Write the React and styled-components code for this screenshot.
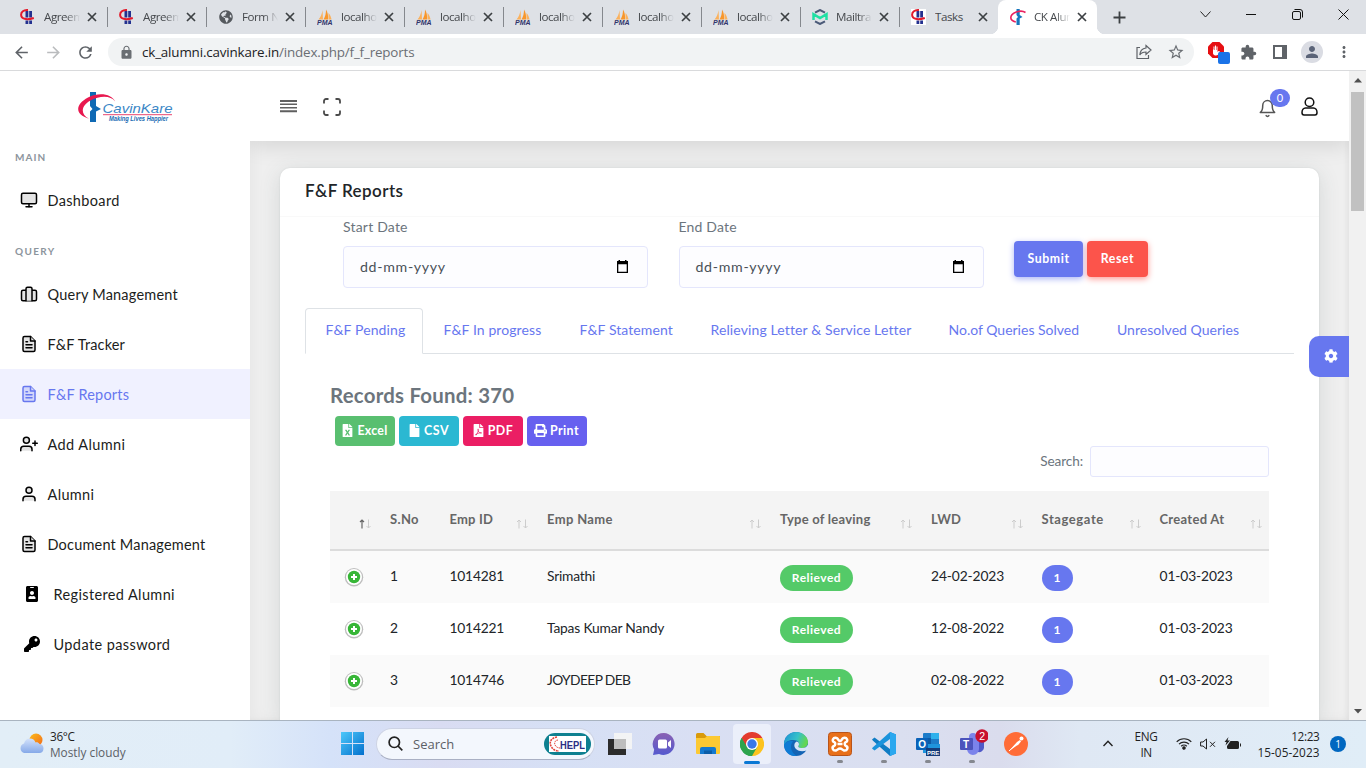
import React from 'react';
import styled, { createGlobalStyle, css } from 'styled-components';
import { FiMonitor, FiBriefcase, FiFileText, FiUserPlus, FiUser, FiBell } from 'react-icons/fi';
import { FaIdBadge, FaKey, FaCog, FaFileExcel, FaFile, FaFilePdf, FaPrint, FaGlobeAmericas } from 'react-icons/fa';
import { MdLock, MdExtension, MdPerson, MdStarBorder, MdRefresh, MdArrowBack, MdArrowForward, MdMoreVert } from 'react-icons/md';

const GlobalStyle = createGlobalStyle`
  *, *::before, *::after { box-sizing: border-box; }
  html, body { margin: 0; padding: 0; overflow: hidden; }
  body { font-family: Lato, "Liberation Sans", sans-serif; }
  svg { display: block; flex: none; }
`;

const ui = '"Open Sans", "Noto Sans", sans-serif';

/* ---------- shared ---------- */
const Label = styled.span`
  white-space: nowrap;
  letter-spacing: ${(p) => p.$ls || 0}px;
`;

const Screen = styled.div`
  width: 1366px;
  height: 768px;
  display: flex;
  flex-direction: column;
  overflow: hidden;
  background: #fff;
`;

/* ---------- browser ---------- */
const TabStrip = styled.div`
  height: 34px;
  flex: none;
  display: flex;
  background: #dee1e6;
  padding-left: 8px;
  font: 12px ${ui};
  color: #45484c;
`;

const BrowserTab = styled.div`
  position: relative;
  width: 99px;
  height: 34px;
  flex: none;
  display: flex;
  align-items: center;
  padding-left: 11px;
  border-radius: 8px 8px 0 0;
  ${(p) => p.$divider && css`
    &::after { content: ''; position: absolute; right: -1px; top: 7px; width: 1px; height: 20px; background: #85888d; }
  `}
  ${(p) => p.$active && css`
    background: #fff;
    &::before, &::after { content: ''; position: absolute; bottom: 0; width: 8px; height: 8px; }
    &::before { left: -8px; background: radial-gradient(circle at 0 0, #dee1e6 8px, #fff 8.5px); }
    &::after { right: -8px; background: radial-gradient(circle at 100% 0, #dee1e6 8px, #fff 8.5px); }
  `}
`;

const TabTitle = styled.span`
  width: 36px;
  margin-left: 8px;
  margin-right: 7px;
  margin-top: -1px;
  overflow: hidden;
  white-space: nowrap;
  font-size: 11.6px;
  letter-spacing: -0.45px;
  -webkit-mask-image: ${(p) => (p.$plain ? 'none' : 'linear-gradient(90deg, #000 60%, transparent 100%)')};
`;

const NewTab = styled.div`
  width: 44px;
  display: flex;
  align-items: center;
  justify-content: center;
`;

const WindowControls = styled.div`
  margin-left: auto;
  display: grid;
  grid-template-columns: repeat(4, 46px);
  justify-items: center;
  align-items: center;
  height: 28px;
`;

const AddressBar = styled.div`
  height: 37px;
  flex: none;
  display: flex;
  align-items: center;
  border-bottom: 1px solid #d9dadc;
  padding: 0 6px 0 12px;
  color: #5f6368;
`;

const NavButtons = styled.div`
  width: 96px;
  display: flex;
  gap: 13px;
`;

const Omnibox = styled.div`
  width: 1086px;
  height: 28px;
  border-radius: 14px;
  background: #f1f3f4;
  display: flex;
  align-items: center;
  padding: 0 0 0 11px;
  font: 13.4px ${ui};
  color: #6a6e73;
`;

const Url = styled.div`
  margin-left: 8px;
  flex: 1;
  white-space: nowrap;
  letter-spacing: -0.16px;
  b { font-weight: 400; color: #202124; }
`;

const Extensions = styled.div`
  margin-left: auto;
  display: flex;
  align-items: center;
`;

const ExtSlot = styled.div`
  width: ${(p) => p.$w}px;
  display: flex;
  justify-content: center;
`;

const Profile = styled.div`
  width: 22px;
  height: 22px;
  border-radius: 50%;
  background: #dadce3;
  color: #5b6478;
  display: flex;
  align-items: center;
  justify-content: center;
`;

/* ---------- page ---------- */
const Viewport = styled.div`
  height: 649px;
  flex: none;
  display: flex;
  overflow: hidden;
`;

const Sidebar = styled.nav`
  width: 250px;
  flex: none;
  background: #fff;
  padding-top: 20px;
`;

const LogoWrap = styled.div`
  height: 52px;
  padding-left: 77px;
`;

const Section = styled.div`
  height: ${(p) => p.$h}px;
  padding: ${(p) => p.$pt}px 0 0 15px;
  font-size: 10px;
  line-height: 14px;
  font-weight: 700;
  color: #8d959d;
`;

const MenuItem = styled.div`
  height: 50px;
  display: flex;
  align-items: center;
  padding: 2px 0 0 ${(p) => (p.$indent ? 23.5 : 19.5)}px;
  font-size: 14.5px;
  line-height: 20px;
  color: ${(p) => (p.$active ? '#6777ef' : '#1b1d20')};
  background: ${(p) => (p.$active ? '#f0f1ff' : 'transparent')};
`;

const MenuIcon = styled.span`
  width: ${(p) => (p.$indent ? 30 : 28)}px;
  margin-top: -3px;
  color: ${(p) => (p.$active ? '#6777ef' : '#000')};
  svg { fill: ${(p) => (p.$solid ? 'currentColor' : p.$active ? '#d3d7fa' : '#e4e4e4')}; }
`;

const Main = styled.main`
  width: 1099px;
  flex: none;
  display: flex;
  flex-direction: column;
  background: #efefef;
  box-shadow: inset 4px 0 14px rgba(0, 0, 0, 0.035), inset -3px 0 4px rgba(0, 0, 0, 0.04);
`;

const TopBar = styled.header`
  height: 70px;
  flex: none;
  display: flex;
  align-items: center;
  padding: 1px 31px 0 29.5px;
  background: #fff;
  box-shadow: 0 3px 22px rgba(0, 0, 0, 0.13);
  clip-path: inset(0 0 -40px 0);
`;

const TopLeft = styled.div`
  display: flex;
  align-items: center;
  gap: 26px;
`;

const TopRight = styled.div`
  margin-left: auto;
  display: flex;
  align-items: center;
  gap: 24px;
`;

const BellWrap = styled.div`
  position: relative;
  color: #555;
  padding-top: 4px;
`;

const Count = styled.span`
  position: absolute;
  left: 12px;
  top: -6px;
  width: 20px;
  height: 18px;
  border-radius: 9px;
  background: #6777ef;
  color: #fff;
  font-size: 11px;
  line-height: 18px;
  text-align: center;
`;

const Card = styled.section`
  margin: 27px 30px 0;
  flex: 1;
  background: #fff;
  border-radius: 10px 10px 0 0;
  box-shadow: 0 4px 22px rgba(60, 80, 80, 0.14), 0 0 2px rgba(60, 80, 80, 0.12);
`;

const CardHeader = styled.h4`
  margin: 0;
  height: 49px;
  padding: 12px 25px 0;
  border-bottom: 1px solid #f9f9f9;
  font-size: 17px;
  line-height: 22px;
  font-weight: 600;
  color: #212529;
`;

const FilterRow = styled.div`
  height: 91px;
  padding-left: 63px;
  display: flex;
  gap: 30.5px;
`;

const Field = styled.label`
  width: 305px;
  display: flex;
  flex-direction: column;
  font-size: 14px;
  line-height: 20px;
  color: #6c757d;
`;

const DateInput = styled.div`
  margin-top: 9px;
  height: 42px;
  border: 1px solid #e4e6fc;
  border-radius: 4px;
  background: #fdfdff;
  display: flex;
  align-items: center;
  justify-content: space-between;
  padding: 0 18px 1px 16px;
  font-size: 14.2px;
  color: #495057;
`;

const Actions = styled.div`
  padding-top: 24px;
  display: flex;
  gap: 4px;
`;

const ActionButton = styled.button`
  width: ${(p) => p.$w}px;
  height: 36px;
  padding: 0 0 2px;
  border: 0;
  border-radius: 4px;
  font: 700 12.3px Lato, sans-serif;
  color: #fff;
  background: ${(p) => p.$bg};
  box-shadow: 0 2px 6px ${(p) => p.$glow};
`;

const Tabs = styled.div`
  margin: 0 25px;
  height: 46px;
  display: flex;
  box-shadow: inset 0 -1px #dee2e6;
`;

const Tab = styled.div`
  height: 46px;
  width: ${(p) => p.$w}px;
  padding: 0 0 3px 19.500px;
  display: flex;
  align-items: center;
  font-size: 14px;
  color: #6777ef;
  border: 1px solid transparent;
  ${(p) => p.$active && css`
    background: #fff;
    border-color: #dee2e6 #dee2e6 #fff;
    border-radius: 4px 4px 0 0;
  `}
`;

const Pane = styled.div`
  padding: 28px 50px 0;
`;

const Records = styled.h3`
  margin: 0;
  height: 34px;
  font-size: 20.4px;
  line-height: 26px;
  font-weight: 700;
  color: #6c757d;
`;

const Exports = styled.div`
  padding-left: 5px;
  display: flex;
  gap: 4px;
`;

const ExportButton = styled.button`
  width: 60px;
  height: 30px;
  padding: 0 1px 1px 0;
  border: 0;
  border-radius: 4px;
  display: flex;
  align-items: center;
  justify-content: center;
  gap: 3px;
  font: 700 12.4px Lato, sans-serif;
  color: #fff;
  background: ${(p) => p.$bg};
`;

const SearchRow = styled.div`
  height: 45px;
  display: flex;
  justify-content: flex-end;
  font-size: 13.600px;
  line-height: 30px;
  color: #6c757d;
`;

const SearchBox = styled.div`
  margin-left: 7px;
  width: 179px;
  height: 31px;
  border: 1px solid #e4e6fc;
  border-radius: 3px;
  background: #fdfdff;
`;

const columns = '45px 59.5px 97.5px 233px 151px 110.5px 118px 124.5px';

const HeadRow = styled.div`
  display: grid;
  grid-template-columns: ${columns};
  height: 60px;
  background: #f4f4f4;
  border-bottom: 2px solid #dcdcdc;
`;

const HeadCell = styled.div`
  display: flex;
  justify-content: space-between;
  padding: 0 ${(p) => (p.$last ? 6 : 3)}px 0 15px;
  font-size: 13px;
  font-weight: 700;
  line-height: 56px;
  color: #666;
`;

const SortMark = styled.span`
  margin-left: auto;
  padding-top: 28px;
`;

const BodyRow = styled.div`
  display: grid;
  grid-template-columns: ${columns};
  height: 52px;
  background: ${(p) => (p.$odd ? '#fafafa' : '#fff')};
`;

const Cell = styled.div`
  display: flex;
  align-items: center;
  padding-left: 15px;
  padding-bottom: 3px;
  font-size: 13.8px;
  color: #212529;
`;

const PlusHolder = styled.span`
  margin-left: -1px;
  padding-top: 3px;
`;

const Pill = styled.span`
  margin-top: 4px;
  width: ${(p) => p.$w}px;
  height: 26px;
  border-radius: 15px;
  background: ${(p) => p.$bg};
  color: #fff;
  font-size: 12px;
  font-weight: 700;
  line-height: 25.5px;
  text-align: center;
`;

const Settings = styled.div`
  position: absolute;
  left: 1309px;
  top: 336px;
  width: 40px;
  height: 41px;
  border-radius: 10px 0 0 10px;
  background: #6777ef;
  color: #fff;
  display: flex;
  align-items: center;
  justify-content: center;
  padding: 0 0 1px 3px;
`;

const ScrollTrack = styled.div`
  width: 17px;
  flex: none;
  background: #f1f1f1;
  display: flex;
  flex-direction: column;
  align-items: center;
  justify-content: space-between;
`;

const ScrollArrow = styled.div`
  width: 17px;
  height: ${(p) => (p.$down ? 18 : 21)}px;
  padding-bottom: ${(p) => (p.$down ? 0 : 2)}px;
  display: flex;
  align-items: center;
  justify-content: center;
`;

const ScrollThumb = styled.div`
  width: 13px;
  height: 119px;
  margin-bottom: auto;
  background: #c1c1c1;
`;

/* ---------- taskbar ---------- */
const Taskbar = styled.footer`
  height: 48px;
  flex: none;
  border-top: 1px solid #a9b4c0;
  padding-bottom: 2px;
  display: flex;
  align-items: center;
  font: 11.8px ${ui};
  color: #1f1f1f;
  background: linear-gradient(90deg, #e2eef7 0, #e1edf8 230px, #d5e2f9 330px, #d9dcf2 440px, #d6e0f5 560px, #d9dff3 700px, #dadff0 900px, #dadced 1000px, #dfe8f4 1080px, #e0edf7 1366px);
`;

const Weather = styled.div`
  width: 338.5px;
  padding-left: 18.5px;
  display: flex;
  align-items: center;
  gap: 6.5px;
  line-height: 16px;
  p { margin: 0; }
  p + p { color: #5b6066; }
`;

const SearchPill = styled.div`
  margin-left: 11.5px;
  width: 218.5px;
  height: 32px;
  border-radius: 16px;
  border: 1px solid #cdd3e4;
  border-bottom-color: #a9b0c4;
  background: #f3f7fd;
  display: flex;
  align-items: center;
  padding: 0 3px 0 11px;
  font-size: 13px;
  color: #5c6066;
  > span { margin-left: 10px; flex: 1; }
`;

const AppSlot = styled.div`
  position: relative;
  width: 44px;
  height: 40px;
  display: flex;
  align-items: center;
  justify-content: center;
  ${(p) => p.$current && css`
    width: 38px;
    margin: 0 3px;
    border-radius: 4px;
    background: #ebeffa;
  `}
  &::after {
    content: ${(p) => (p.$current || p.$running ? "''" : 'none')};
    position: absolute;
    bottom: ${(p) => (p.$current ? 0 : 1)}px;
    width: ${(p) => (p.$current ? 16 : 6)}px;
    height: 3px;
    border-radius: 2px;
    background: ${(p) => (p.$current ? '#0a78d4' : '#85888f')};
  }
`;

const AppRow = styled.div`
  display: flex;
  margin-left: 3.5px;
`;

const Tray = styled.div`
  margin-left: auto;
  padding-right: 20px;
  display: flex;
  align-items: center;
  line-height: 16px;
`;

const Language = styled.div`
  width: 24px;
  margin: 0 18px 0 21px;
  text-align: center;
`;

const TrayIcons = styled.div`
  display: flex;
  align-items: center;
  gap: 8px;
`;

const Clock = styled.div`
  width: 78.5px;
  text-align: right;
`;

const Notice = styled.div`
  margin-left: 10.5px;
  width: 16px;
  height: 16px;
  border-radius: 50%;
  background: #0067c0;
  color: #fff;
  font-size: 10px;
  line-height: 16px;
  text-align: center;
`;

/* ---------- drawings ---------- */
const CloseX = () => (
  <svg width="10" height="10" viewBox="0 0 10 10" stroke="#3c4043" strokeWidth="1.7"><path d="M1 1l8 8M9 1L1 9" /></svg>
);

const HeplMark = ({ white }) => (
  <svg width="15" height="16" viewBox="0 0 15 16">
    {white && <rect width="15" height="16" fill="#fff" />}
    <path d="M5.500 2h2.800v6.500H5.500zM9.200 2H12v6.500H9.200zM5.500 11.500h2.800V15H5.500zM9.200 11.500H12V15H9.200z" fill="#23308f" />
    <path d="M8 1C3.500.8 1.100 3 1.100 5.700c0 4.300 5.500 5.600 12.700 3.300" fill="none" stroke="#e31b2c" strokeWidth="2" />
  </svg>
);

const PmaMark = () => (
  <svg width="16" height="16" viewBox="0 0 16 16">
    <path d="M5.500 1L6 10.500H1.500C3.800 8 5 5 5.500 1z" fill="#fbb15c" />
    <path d="M9 .5c1.800 3 2.400 6.500 2 10H6.500C8.300 7.500 9 4.500 9 .5z" fill="#f8962a" />
    <path d="M11.500 4c1.800 2 2.700 4.500 3 6.500h-3z" fill="#fbb15c" />
    <text x="0" y="15.800" fontFamily="Liberation Sans" fontWeight="700" fontStyle="italic" fontSize="6.300" textLength="15.500" lengthAdjust="spacingAndGlyphs" fill="#31336b">PMA</text>
  </svg>
);

const MailtrapMark = () => (
  <svg width="16" height="16" viewBox="0 0 16 16" fill="none">
    <path d="M3 3.600L8 1l5 2.600M3 12.400L8 15l5-2.600" stroke="#4b5a78" strokeWidth="2" />
    <path d="M1.500 11V5.200L8 9l6.500-3.800V11" stroke="#1fe0a4" strokeWidth="2.500" />
  </svg>
);

const CkMark = () => (
  <svg width="16" height="16" viewBox="0 0 16 16">
    <path d="M6.500 0h3.200v6l2.800 2-2.800 1.500V16H6.500V9.500L8 8 6.500 6z" fill="#1576bd" />
    <path d="M15.500 3.500C10.500 0 .8 4 .8 8.800c0 2 2 3.500 5 4.200" fill="none" stroke="#e8215f" strokeWidth="1.600" />
  </svg>
);

const CavinKareLogo = () => (
  <svg width="97" height="32" viewBox="0 0 97 32">
    <path d="M13 1h6v14l5 3-5 2.500V31h-6V20.500l2.500-2.500-2.500-3z" fill="#0f69b4" />
    <path d="M38 10.500C35 3 22 .8 11 6.500-1.500 13-3 23.500 12 27.800c-9-4.800-8-13 1.500-18.300C23 4.500 34 4.500 38 10.500z" fill="#e8184f" />
    <text x="25.500" y="22" fontFamily="Liberation Sans" fontStyle="italic" fontSize="13.500" textLength="70" lengthAdjust="spacingAndGlyphs" fill="#3b87c6">CavinKare</text>
    <path d="M26 23.700h69" stroke="#e8476f" strokeWidth="1" />
    <text x="32" y="30" fontFamily="Liberation Sans" fontWeight="700" fontStyle="italic" fontSize="6.300" textLength="59" lengthAdjust="spacingAndGlyphs" fill="#1a6cb3">Making Lives Happier</text>
  </svg>
);

const Calendar = () => (
  <svg width="13" height="13" viewBox="0 0 13 13"><path d="M2.500 0h1.500v1h5V0h1.500v1H12v12H1V1h1.500zM2.300 4.200v7.500h8.400V4.200z" fill="#000" fillRule="evenodd" /></svg>
);

const Sort = ({ up }) => (
  <svg width="13" height="10" viewBox="0 0 13 10" fill="none" strokeWidth="1">
    <path d="M3 9.500V1M1 3l2-2 2 2" stroke={up ? '#666' : '#ccc'} strokeWidth={up ? 1.200 : 1} />
    <path d="M9.500 .5V9M7.500 7l2 2 2-2" stroke="#ccc" />
  </svg>
);

const Plus = () => (
  <svg width="20" height="20" viewBox="0 0 20 20">
    <circle cx="10" cy="10.300" r="9.200" fill="#bdbdbd" />
    <circle cx="10" cy="10" r="8" fill="#fff" />
    <circle cx="10" cy="10" r="6.200" fill="#37b637" />
    <path d="M10 7v6M7 10h6" stroke="#fff" strokeWidth="2" />
  </svg>
);

const tabs = [
  ['hepl', 'Agreement'], ['hepl', 'Agreement'], ['globe', 'Form Nam'], ['pma', 'localhost'], ['pma', 'localhost'],
  ['pma', 'localhost'], ['pma', 'localhost'], ['pma', 'localhost'], ['mail', 'Mailtrap'], ['heplw', 'Tasks'], ['ck', 'CK Alumni'],
];
const marks = {
  hepl: <HeplMark />, heplw: <HeplMark white />, globe: <FaGlobeAmericas size={14} color="#55595e" />,
  pma: <PmaMark />, mail: <MailtrapMark />, ck: <CkMark />,
};

const Favicon = styled.span`
  width: 17px;
  display: flex;
  justify-content: center;
`;

const Browser = () => (
  <>
    <TabStrip>
      {tabs.map(([mark, title], i) => (
        <BrowserTab key={i} $active={i === 10} $divider={i < 9}>
          <Favicon>{marks[mark]}</Favicon>
          <TabTitle $plain={title === 'Tasks'}>{title}</TabTitle>
          <CloseX />
        </BrowserTab>
      ))}
      <NewTab><svg width="13" height="13" viewBox="0 0 13 13" stroke="#3c4043" strokeWidth="1.800"><path d="M6.500 .5v12M.5 6.500h12" /></svg></NewTab>
      <WindowControls>
        <svg width="11" height="7" viewBox="0 0 11 7" fill="none" stroke="#222"><path d="M.5 .5l5 5.500 5-5.500" /></svg>
        <svg width="10" height="2" viewBox="0 0 10 2"><path d="M0 1h10v1H0z" fill="#111" /></svg>
        <svg width="11" height="11" viewBox="0 0 11 11" fill="none" stroke="#111"><rect x=".5" y="2.500" width="8" height="8" rx="1.500" /><path d="M2.500 .5h5.500a2.500 2.500 0 012.500 2.500v5.500" /></svg>
        <svg width="11" height="11" viewBox="0 0 11 11" stroke="#111"><path d="M.5 .5l10 10M10.500 .5l-10 10" /></svg>
      </WindowControls>
    </TabStrip>
    <AddressBar>
      <NavButtons>
        <MdArrowBack size={19} />
        <MdArrowForward size={19} color="#babcbe" />
        <MdRefresh size={19} />
      </NavButtons>
      <Omnibox>
        <MdLock size={15} />
        <Url><b>ck_alumni.cavinkare.in</b>/index.php/f_f_reports</Url>
        <ExtSlot $w={28}><svg width="16" height="16" viewBox="0 0 16 16" fill="none" stroke="#5f6368" strokeWidth="1.200"><path d="M4 3.500H1v11h11.500V11" /><path d="M10 1.500L15 6l-5 4.500V8C7 8 5 9 3.800 11c.2-4 2.500-6.500 6.200-7z" /></svg></ExtSlot>
        <ExtSlot $w={36}><MdStarBorder size={18} /></ExtSlot>
      </Omnibox>
      <Extensions>
        <ExtSlot $w={28}>
          <svg width="23" height="23" viewBox="0 0 23 23">
            <path d="M5.500 1h7L17 5.500v7L12.500 17h-7L1 12.500v-7z" fill="#e60f12" />
            <path d="M6 8v4.500c.5 1.500 1.500 2 3 2s2.500-1 4-4l-1.500-.5-1 1V5.500h-1V9h-.5V4.500h-1V9H7.500V5.500h-1V9z" fill="#fff" />
            <rect x="11" y="11" width="12" height="12" rx="2" fill="#1a73e8" />
          </svg>
        </ExtSlot>
        <ExtSlot $w={32}><MdExtension size={17} /></ExtSlot>
        <ExtSlot $w={32}><svg width="14" height="14" viewBox="0 0 14 14"><path d="M0 0h14v14H0zM2 2v10h7V2z" fill="#5f6368" fillRule="evenodd" /></svg></ExtSlot>
        <ExtSlot $w={32}><Profile><MdPerson size={18} /></Profile></ExtSlot>
        <ExtSlot $w={32}><MdMoreVert size={18} /></ExtSlot>
      </Extensions>
    </AddressBar>
  </>
);

const menu = [
  [FiBriefcase, 'Query Management', 0.22], [FiFileText, 'F&F Tracker', 0.15], [FiFileText, 'F&F Reports', 0.2],
  [FiUserPlus, 'Add Alumni', 0.4], [FiUser, 'Alumni', 0.35], [FiFileText, 'Document Management', 0.19],
  [FaIdBadge, 'Registered Alumni', 0.37], [FaKey, 'Update password', 0.4],
];

const Navigation = () => (
  <Sidebar>
    <LogoWrap><CavinKareLogo /></LogoWrap>
    <Section $h={32} $pt={7}><Label $ls={1.05}>MAIN</Label></Section>
    <MenuItem><MenuIcon><FiMonitor size={18} /></MenuIcon><Label $ls={0.35}>Dashboard</Label></MenuItem>
    <Section $h={44} $pt={19}><Label $ls={1.35}>QUERY</Label></Section>
    {menu.map(([Icon, text, ls], i) => {
      const solid = i > 5;
      const active = i === 2;
      return (
        <MenuItem key={text} $active={active} $indent={solid}>
          <MenuIcon $active={active} $indent={solid} $solid={solid}><Icon size={solid ? 16 : 18} /></MenuIcon>
          <Label $ls={ls}>{text}</Label>
        </MenuItem>
      );
    })}
  </Sidebar>
);

const reportTabs = [
  ['F&F Pending', 118, 0.11], ['F&F In progress', 136, 0.09], ['F&F Statement', 131, 0.08],
  ['Relieving Letter & Service Letter', 238, 0.12], ['No.of Queries Solved', 168.500, 0], ['Unresolved Queries', 160, 0.03],
];
const heads = [
  ['', 0], ['S.No', 0.33], ['Emp ID', 0.2], ['Emp Name', 0.35], ['Type of leaving', 0.24], ['LWD', 0.28], ['Stagegate', 0.58], ['Created At', 0.29],
];
const rows = [
  ['1', '1014281', 'Srimathi', '24-02-2023', -0.2],
  ['2', '1014221', 'Tapas Kumar Nandy', '12-08-2022', -0.18],
  ['3', '1014746', 'JOYDEEP DEB', '02-08-2022', -0.62],
];
const exportsList = [
  ['Excel', '#59bf70', FaFileExcel, 0.25], ['CSV', '#2bb8d2', FaFile, 0.6], ['PDF', '#eb1e64', FaFilePdf, 0.5], ['Print', '#6760ef', FaPrint, 0.4],
];

const Report = () => (
  <Card>
    <CardHeader><Label $ls={0.42}>F&amp;F Reports</Label></CardHeader>
    <FilterRow>
      <Field><Label $ls={0.2}>Start Date</Label><DateInput><Label $ls={0.68}>dd-mm-yyyy</Label><Calendar /></DateInput></Field>
      <Field><Label $ls={0.17}>End Date</Label><DateInput><Label $ls={0.68}>dd-mm-yyyy</Label><Calendar /></DateInput></Field>
      <Actions>
        <ActionButton $w={69} $bg="#6777ef" $glow="#acb5f6"><Label $ls={0.6}>Submit</Label></ActionButton>
        <ActionButton $w={61} $bg="#fc544b" $glow="#fd9b96"><Label $ls={0.6}>Reset</Label></ActionButton>
      </Actions>
    </FilterRow>
    <Tabs>
      {reportTabs.map(([text, w, ls], i) => <Tab key={text} $w={w} $active={i === 0}><Label $ls={ls}>{text}</Label></Tab>)}
    </Tabs>
    <Pane>
      <Records><Label $ls={0.24}>Records Found: 370</Label></Records>
      <Exports>
        {exportsList.map(([text, bg, Icon, ls]) => (
          <ExportButton key={text} $bg={bg}><Icon size={13} /><Label $ls={ls}>{text}</Label></ExportButton>
        ))}
      </Exports>
      <SearchRow><Label $ls={-0.08}>Search:</Label><SearchBox /></SearchRow>
      <HeadRow>
        {heads.map(([text, ls], i) => (
          <HeadCell key={i} $last={i === 7}>
            <Label $ls={ls}>{text}</Label>
            {i !== 1 && <SortMark><Sort up={i === 0} /></SortMark>}
          </HeadCell>
        ))}
      </HeadRow>
      {rows.map(([no, id, name, lwd, ls], i) => (
        <BodyRow key={no} $odd={i % 2 === 0}>
          <Cell><PlusHolder><Plus /></PlusHolder></Cell>
          <Cell>{no}</Cell>
          <Cell><Label $ls={-0.2}>{id}</Label></Cell>
          <Cell><Label $ls={ls}>{name}</Label></Cell>
          <Cell><Pill $w={73} $bg="#54ca68"><Label $ls={0.5}>Relieved</Label></Pill></Cell>
          <Cell><Label $ls={-0.12}>{lwd}</Label></Cell>
          <Cell><Pill $w={31} $bg="#6777ef">1</Pill></Cell>
          <Cell><Label $ls={-0.12}>01-03-2023</Label></Cell>
        </BodyRow>
      ))}
    </Pane>
  </Card>
);

const Page = () => (
  <Viewport>
    <Navigation />
    <Main>
      <TopBar>
        <TopLeft>
          <svg width="17" height="13" viewBox="0 0 17 13" fill="#5f5f5f"><path d="M0 0h17v2H0zM0 3.500h17v1.500H0zM0 7h17v1.500H0zM0 10.300h17v2H0z" /></svg>
          <svg width="18" height="18" viewBox="0 0 18 18" fill="none" stroke="#4a4a4a" strokeWidth="1.800"><path d="M1 5.500V3a2 2 0 012-2h2.500M12.500 1H15a2 2 0 012 2v2.500M17 12.500V15a2 2 0 01-2 2h-2.500M5.500 17H3a2 2 0 01-2-2v-2.500" /></svg>
        </TopLeft>
        <TopRight>
          <BellWrap><FiBell size={19} strokeWidth={1.900} /><Count>0</Count></BellWrap>
          <svg width="17" height="19" viewBox="0 0 17 19" fill="none" stroke="#111" strokeWidth="1.500"><circle cx="8.500" cy="5.200" r="4.300" /><path d="M4.500 11h8c2 0 3.500 2 3.500 4.500 0 1.500-.5 2.500-2 2.500H3c-1.500 0-2-1-2-2.500C1 13 2.500 11 4.500 11z" /></svg>
        </TopRight>
      </TopBar>
      <Report />
    </Main>
    <ScrollTrack>
      <ScrollArrow><svg width="8" height="5" viewBox="0 0 8 5"><path d="M4 0l4 4.500H0z" fill="#505050" /></svg></ScrollArrow>
      <ScrollThumb />
      <ScrollArrow $down><svg width="8" height="5" viewBox="0 0 8 5"><path d="M4 4.500L8 0H0z" fill="#505050" /></svg></ScrollArrow>
    </ScrollTrack>
    <Settings><FaCog size={14} /></Settings>
  </Viewport>
);

const apps = [
  ['', <svg width="24" height="24" viewBox="0 0 24 24"><rect x="0" y="7" width="18" height="16" fill="#2c2c2c" /><rect x="6" y="1" width="18" height="16" fill="#f4f4f4" opacity=".95" /><rect x="6" y="7" width="12" height="10" fill="#bdbdbd" /></svg>],
  ['', <svg width="24" height="24" viewBox="0 0 24 24"><defs><linearGradient id="chat" x1="0" y1="0" x2="0" y2="1"><stop offset="0" stopColor="#8a62b3" /><stop offset="1" stopColor="#5459cf" /></linearGradient></defs><path d="M12 1a11 11 0 11-5 21L1 23l1.200-5.500A11 11 0 0112 1z" fill="url(#chat)" /><rect x="6" y="7.500" width="9" height="9" rx="1.500" fill="#fff" /><path d="M16 10.500l3-2.500v8l-3-2.500z" fill="#fff" /></svg>],
  ['', <svg width="24" height="24" viewBox="0 0 24 24"><path d="M0 2.500A1.500 1.500 0 011.500 1h6l3 3H24v5H0z" fill="#d99a0b" /><path d="M0 6h9l2-2h12a1 1 0 011 1v16a1 1 0 01-1 1H1a1 1 0 01-1-1z" fill="#fcc933" /><path d="M4 17a2 2 0 012-2h12a2 2 0 012 2v5H4z" fill="#1479cf" /><path d="M8 18.500h8V22H8z" fill="#0b5da8" /></svg>],
  ['current', <svg width="24" height="24" viewBox="0 0 24 24"><path d="M12 12L1.600 6A12 12 0 0122.400 6z" fill="#e33b2e" /><path d="M12 12L22.400 6A12 12 0 0112 24z" fill="#fcc31e" /><path d="M12 12v12A12 12 0 011.600 6z" fill="#2da44e" /><path d="M12 6h10.400L17.200 15z" fill="#fcc31e" /><path d="M6.800 15L1.600 6l5 .2L12 6z" fill="#e33b2e" /><path d="M1.600 6L6.800 15 12 18 17.200 15 12 24A12 12 0 011.600 6z" fill="#2da44e" /><circle cx="12" cy="12" r="6" fill="#fff" /><circle cx="12" cy="12" r="4.700" fill="#3a78e8" /></svg>],
  ['', <svg width="24" height="24" viewBox="0 0 24 24"><defs><linearGradient id="edge" x1="0" y1="0" x2="1" y2=".3"><stop offset="0" stopColor="#1b8fd6" /><stop offset=".6" stopColor="#35c1c9" /><stop offset="1" stopColor="#62d653" /></linearGradient></defs><circle cx="12" cy="12" r="12" fill="#1464b4" /><path d="M0 11C1 4 6 0 12 0c7 0 12 5 12 10 0 4-3 6-6.500 6-2.500 0-4-1-3-2.200C16 11 14 8 9.500 8 5 8 1 9.500 0 14z" fill="url(#edge)" /><path d="M9.300 9.500C5 13 7 21 13 24 5 25 0 19 0 13c1-3 5-5 9.300-3.500z" fill="#0f7bd4" /><path d="M12.500 9.500c-2.500 1.500-3 5-.5 7.500 2.800 2.800 7.500 2.500 10.500 1.500l1.500 1v-7c-1 2.500-3.500 3.700-6.500 3.500-2.500 0-4-1-3-2.200 1.200-1.500.3-4-2-4.300z" fill="#d6e4f6" /></svg>],
  ['running', <svg width="24" height="24" viewBox="0 0 24 24"><rect x=".5" y=".5" width="23" height="23" rx="3" fill="#e8701a" stroke="#b9541a" /><path d="M8.500 6C5 5 3.500 9 6 10c2 .5 1.500 3.500 0 4-2.500 1-1.500 5 2 4.500 2-.5 2-2 4-2s2 1.500 4 2c3.500.5 4.500-3.500 2-4.500-1.500-.5-2-3.500 0-4 2.500-1 1-5-2.500-4C13.500 6.500 14 9 12 9s-1.500-2.500-3.500-3zM9.500 12h5" fill="none" stroke="#fff" strokeWidth="2.500" /></svg>],
  ['running', <svg width="24" height="24" viewBox="0 0 24 24"><path d="M18 0l6 2.500v19L18 24 1 8.800 0 7.500 2.500 5.500 18 17z" fill="#0f7cc4" /><path d="M18 0v7L2.500 18.500 0 16.500l1-1.300z" fill="#1a93dc" /><path d="M18 0l6 2.500v19L18 24z" fill="#2ba8ef" /></svg>],
  ['running', <svg width="24" height="24" viewBox="0 0 24 24"><rect x="7" y="1" width="16" height="19" rx="1" fill="#1d7cc9" /><path d="M7 6h8v6H7z" fill="#0d5aa5" /><path d="M15 1h8v6h-8z" fill="#2fb1ec" /><path d="M7 12h17v9H7z" fill="#1f94dd" /><rect x="0" y="6" width="12" height="12" rx="1" fill="#0a62b8" /><text x="2.200" y="15.500" fontFamily="Liberation Sans" fontWeight="700" fontSize="10" fill="#fff">O</text><rect x="10" y="16" width="14" height="8" fill="#163c7a" /><text x="11" y="22.500" fontFamily="Liberation Sans" fontWeight="700" fontSize="6" fill="#fff">PRE</text></svg>],
  ['running', <svg width="32" height="30" viewBox="0 0 32 30"><circle cx="17" cy="8" r="4" fill="#7b83eb" /><path d="M19 12h9v7a5 5 0 01-6 4z" fill="#5059c9" /><path d="M10 11h13v9a6 6 0 01-12 0z" fill="#7b83eb" /><rect x="4" y="9" width="13" height="12" rx="1" fill="#4b53bc" /><text x="7" y="18.500" fontFamily="Liberation Sans" fontWeight="700" fontSize="10" fill="#fff">T</text><circle cx="26" cy="7" r="6.700" fill="#c8102e" /><text x="23.200" y="11" fontFamily="Liberation Sans" fontSize="10.500" fill="#fff">2</text></svg>],
  ['', <svg width="24" height="24" viewBox="0 0 24 24"><circle cx="12" cy="12" r="12" fill="#ff6c37" /><path d="M5 19l8-9 3-2 1 1.500-2.500 3z" fill="#fff" /><circle cx="17.500" cy="6.500" r="2" fill="#fff" /><path d="M5 19l6.500-6" stroke="#fff" /></svg>],
];

const Desktop = () => (
  <Taskbar>
    <Weather>
      <svg width="25" height="21" viewBox="0 0 25 21"><defs><linearGradient id="sun" x1="0" y1="0" x2="1" y2="1"><stop offset="0" stopColor="#fbbc1a" /><stop offset="1" stopColor="#f26a1b" /></linearGradient><linearGradient id="cloud" x1="0" y1="0" x2="0" y2="1"><stop offset="0" stopColor="#d3e2fb" /><stop offset="1" stopColor="#86a9e8" /></linearGradient></defs><circle cx="17" cy="7" r="6.500" fill="url(#sun)" /><path d="M5 20a5 5 0 010-9.500C6 7 8 5.500 11 5.500c3 0 4.500 1.500 5.500 4 1.500-.5 3 0 4 1.500 3 .3 4 2.500 4 4.500 0 3-2 4.500-4 4.500z" fill="url(#cloud)" /></svg>
      <div><p><Label $ls={-0.35}>36°C</Label></p><p><Label $ls={0}>Mostly cloudy</Label></p></div>
    </Weather>
    <svg width="26" height="23" viewBox="-2 0 26 23"><defs><linearGradient id="win" x1="0" y1="0" x2="1" y2="1"><stop offset="0" stopColor="#4cc8fa" /><stop offset="1" stopColor="#0370cd" /></linearGradient></defs><path d="M0 0h11v11H0zM12 0h11v11H12zM0 12h11v11H0zM12 12h11v11H12z" fill="url(#win)" /></svg>
    <SearchPill>
      <svg width="15" height="15" viewBox="0 0 15 15" fill="none" stroke="#222" strokeWidth="1.700"><circle cx="6.300" cy="6.300" r="5.200" /><path d="M10 10l4.300 4.300" /></svg>
      <span>Search</span>
      <svg width="47" height="22" viewBox="0 0 47 22"><rect width="47" height="22" rx="11" fill="#0e8090" /><rect x="5" y="3" width="37" height="16" fill="#fff" /><g fill="none" stroke="#e2453c"><path d="M13 4C7 5 5 9 7 13s5 5 8 5" strokeWidth="1.600" strokeDasharray="2 .8" /><path d="M14 7c-3 0-4 3-3 5s3 3 5 3" strokeDasharray="1.500 .8" /></g><text x="16" y="16.300" fontFamily="Liberation Sans" fontWeight="700" fontSize="11" textLength="25" lengthAdjust="spacingAndGlyphs" fill="#2b2f86">HEPL</text></svg>
    </SearchPill>
    <AppRow>
      {apps.map(([state, icon], i) => <AppSlot key={i} $current={state === 'current'} $running={state === 'running'}>{icon}</AppSlot>)}
    </AppRow>
    <Tray>
      <svg width="10" height="7" viewBox="0 0 10 7" fill="none" stroke="#222" strokeWidth="1.400"><path d="M.5 6L5 1.200 9.500 6" /></svg>
      <Language><Label $ls={-0.4}>ENG</Label><br /><Label $ls={-0.5}>IN</Label></Language>
      <TrayIcons>
        <svg width="16" height="13" viewBox="0 0 16 13" fill="none" stroke="#222" strokeWidth="1.200"><path d="M.7 4.800a10.300 10.300 0 0114.600 0M3 7.200a7 7 0 0110 0M5.200 9.300a4 4 0 015.600 0" /><circle cx="8" cy="11" r="1.200" fill="#222" /></svg>
        <svg width="16" height="12" viewBox="0 0 16 12" fill="none" stroke="#222"><path d="M.6 4v4h2.400l3.500 3V1L3 4zM10 3.800l5 5M15 3.800l-5 5" /></svg>
        <svg width="17" height="14" viewBox="0 0 17 14"><path d="M6.500 4h7A1.500 1.500 0 0115 5.500v5a1.500 1.500 0 01-1.500 1.500h-9A1.500 1.500 0 013 10.500V9zM16 6.500h1v3h-1z" fill="#222" /><path d="M4.500 0L.5 5h2L1.500 8.500 6 3.500H3.500z" fill="#222" /></svg>
      </TrayIcons>
      <Clock><Label $ls={-0.35}>12:23</Label><br /><Label $ls={0.05}>15-05-2023</Label></Clock>
      <Notice>1</Notice>
    </Tray>
  </Taskbar>
);

export default function App() {
  return (
    <Screen>
      <GlobalStyle />
      <Browser />
      <Page />
      <Desktop />
    </Screen>
  );
}
